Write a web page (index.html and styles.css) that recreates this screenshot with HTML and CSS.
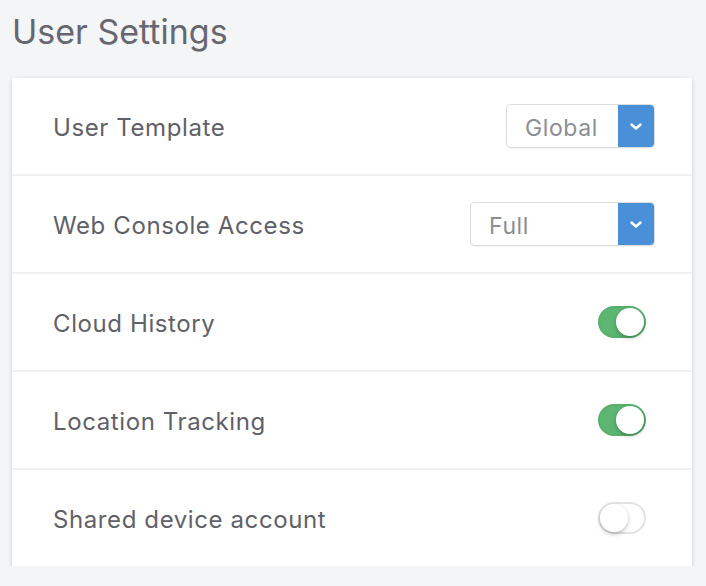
FILE: index.html
```html
<!DOCTYPE html>
<html>
<head>
<meta charset="utf-8">
<link rel="stylesheet" href="styles.css">
</head>
<body>
<h1 class="title">User Settings</h1>
<div class="card">
  <div class="row">
    <span class="label">User Template</span>
    <div class="select select-global">
      <span class="select-value">Global</span>
      <span class="select-btn"><svg width="14" height="9" viewBox="0 0 14 9"><path d="M2.5 2.5 L7 6.5 L11.5 2.5" fill="none" stroke="#fff" stroke-width="2.4" stroke-linecap="round" stroke-linejoin="round"/></svg></span>
    </div>
  </div>
  <div class="row">
    <span class="label">Web Console Access</span>
    <div class="select select-full">
      <span class="select-value">Full</span>
      <span class="select-btn"><svg width="14" height="9" viewBox="0 0 14 9"><path d="M2.5 2.5 L7 6.5 L11.5 2.5" fill="none" stroke="#fff" stroke-width="2.4" stroke-linecap="round" stroke-linejoin="round"/></svg></span>
    </div>
  </div>
  <div class="row">
    <span class="label">Cloud History</span>
    <span class="toggle on"><span class="knob"></span></span>
  </div>
  <div class="row">
    <span class="label">Location Tracking</span>
    <span class="toggle on"><span class="knob"></span></span>
  </div>
  <div class="row">
    <span class="label">Shared device account</span>
    <span class="toggle"><span class="knob"></span></span>
  </div>
</div>
</body>
</html>
```
FILE: styles.css
```css
html, body {
  margin: 0;
  padding: 0;
  background: #f4f5f7;
  font-family: Inter, "Liberation Sans", Arial, sans-serif;
}
body {
  padding: 8px 14px 0 12px;
}
.title {
  margin: 0 0 22px 0;
  font-size: 34px;
  font-weight: 400;
  color: #67676f;
  line-height: 48px;
}
.card {
  width: 680px;
  background: #fff;
  box-shadow: 0 1px 4px rgba(0,0,0,0.12), 0 2px 6px rgba(0,0,0,0.06);
}
.row {
  height: 96px;
  display: flex;
  align-items: center;
  justify-content: space-between;
  padding: 0 38px 0 41px;
  border-bottom: 2px solid #f1f1f2;
}
.row:last-child {
  border-bottom: none;
}
.label {
  font-size: 24px;
  letter-spacing: 0.6px;
  color: #606168;
  padding-top: 2px;
}
.select {
  display: flex;
  height: 42px;
  border-radius: 4px;
  box-shadow: 0 0 0 1px #dcdcdf, 0 1px 2px rgba(0,0,0,0.12);
  overflow: hidden;
  background: #fff;
}
.select-global { width: 147px; }
.select-full { width: 183px; }
.select-value {
  flex: 1;
  font-size: 23px;
  letter-spacing: 0.6px;
  color: #8b8e94;
  display: flex;
  align-items: center;
  padding-top: 4px;
}
.select-global .select-value { padding-left: 18px; }
.select-full .select-value { padding-left: 18px; }
.select-btn {
  width: 36px;
  background: #4a90d9;
  display: flex;
  align-items: center;
  justify-content: center;
}
.toggle {
  width: 48px;
  height: 32px;
  box-sizing: border-box;
  border-radius: 16px;
  background: #fff;
  border: 2px solid #e3e3e5;
  position: relative;
  display: block;
  margin-right: 8px;
}
.toggle.on {
  background: #5cb672;
  border-color: #57b06d;
}
.knob {
  position: absolute;
  top: 0;
  left: 0;
  width: 28px;
  height: 28px;
  border-radius: 50%;
  background: #fff;
  box-shadow: 0 2px 4px rgba(0,0,0,0.25);
}
.toggle.on .knob {
  left: 16px;
}
```
